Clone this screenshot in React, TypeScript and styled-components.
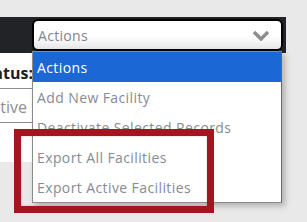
import React from 'react';
import styled, {createGlobalStyle} from 'styled-components';

const GlobalStyle = createGlobalStyle`
  body {
    margin: 0;
    background: #e9e9e9;
    font-family: "Open Sans", "Liberation Sans", sans-serif;
  }
`;

const items = [
    'Actions',
    'Add New Facility',
    'Deactivate Selected Records',
    'Export All Facilities',
    'Export Active Facilities',
];

const Page = styled.div`
  position: relative;
  width: 307px;
  height: 222px;
  padding-top: 17px;
  box-sizing: border-box;
  overflow: hidden;
`;

const Header = styled.div`
  width: 286px;
  height: 36px;
  background: #212327;
  box-sizing: border-box;
  padding: 2px 0 0 32px;
`;

const SelectBox = styled.div`
  width: 251px;
  height: 32px;
  box-sizing: border-box;
  border: 2px solid #000;
  border-radius: 6px;
  background: linear-gradient(#ffffff 55%, #e6e6e6);
  display: flex;
  align-items: center;
  justify-content: space-between;
  padding: 0 11px 0 4px;
  font-size: 14px;
  letter-spacing: 0.3px;
  color: #7d8591;
`;

const Panel = styled.div`
  width: 120px;
  height: 109px;
  background: #fff;
  display: flex;
  flex-direction: column;
`;

const FieldRow = styled.div<{ $bold?: boolean }>`
  width: 33px;
  height: 34px;
  box-sizing: border-box;
  border-bottom: 1px solid #8c8c8c;
  overflow: hidden;
  display: flex;
  justify-content: flex-end;
  align-items: center;
  white-space: nowrap;
  font-size: 16px;
  font-weight: ${p => (p.$bold ? 700 : 400)};
  color: ${p => (p.$bold ? '#1d1d1d' : '#8f8f8f')};
  padding-top: ${p => (p.$bold ? '0' : '2px')};
  padding-right: ${p => (p.$bold ? '0' : '6px')};
  &:first-child {
    height: 36px;
    padding-top: 4px;
  }
`;

const Menu = styled.ul`
  position: absolute;
  left: 32px;
  top: 51px;
  width: 250px;
  margin: 0;
  padding: 0;
  list-style: none;
  background: #fff;
  border: 1px solid #8a8a8a;
  border-right-color: #6a6a6a;
  box-sizing: border-box;
  box-shadow: 3px 3px 6px rgba(0, 0, 0, 0.25);
`;

const MenuItem = styled.li<{ $active?: boolean }>`
  height: 30px;
  display: flex;
  align-items: center;
  padding-left: 4px;
  font-size: 14px;
  letter-spacing: 0.4px;
  color: ${p => (p.$active ? '#fff' : '#858b95')};
  background: ${p => (p.$active ? '#1b67d3' : 'transparent')};
`;

const Highlight = styled.div`
  position: absolute;
  left: 14px;
  top: 129px;
  width: 200px;
  height: 84px;
  box-sizing: border-box;
  border: 7px solid #a3161f;
  box-shadow: inset 0 0 2px rgba(0, 0, 0, 0.25);
`;

const Chevron = () => (
    <svg width="18" height="11" viewBox="0 0 18 11">
        <path d="M2 2 L9 9 L16 2" fill="none" stroke="#8e8e8e" strokeWidth="3.5"/>
    </svg>
);

export default function App() {
    return (
        <Page>
            <GlobalStyle/>
            <Header>
                <SelectBox>
                    <span>Actions</span>
                    <Chevron/>
                </SelectBox>
            </Header>
            <Panel>
                <FieldRow $bold>Status:</FieldRow>
                <FieldRow>Active</FieldRow>
            </Panel>
            <Menu>
                {items.map((item, i) => (
                    <MenuItem key={item} $active={i === 0}>{item}</MenuItem>
                ))}
            </Menu>
            <Highlight/>
        </Page>
    );
}
